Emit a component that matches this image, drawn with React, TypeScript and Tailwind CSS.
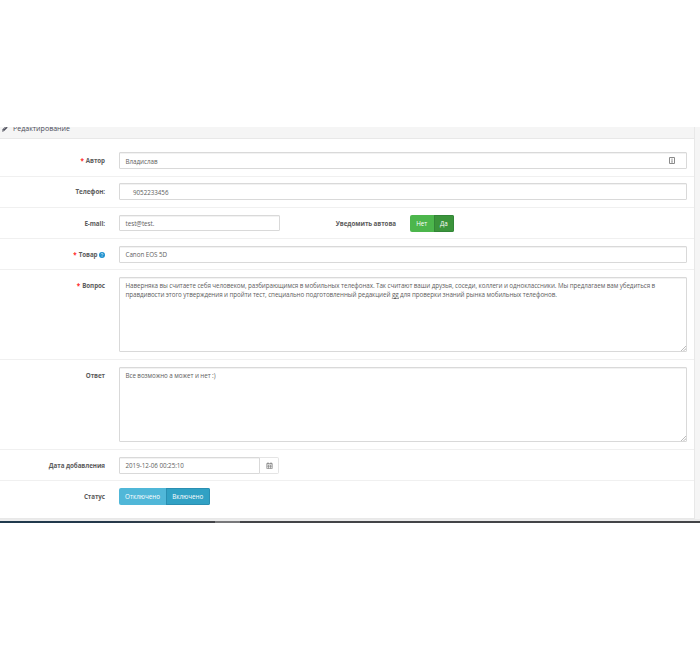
import type { ReactNode } from 'react';
import clsx from 'clsx';
import { FaPencilAlt } from 'react-icons/fa';

const FIELD =
  'block border border-[#d9d9d9] bg-white px-[5.5px] text-[6.25px] tracking-[-0.03px] text-[#606060] shadow-[inset_0_1px_0_#f2f2f2] outline-none';

function Row({
  label,
  required,
  help,
  className,
  children,
}: {
  label: string;
  required?: boolean;
  help?: boolean;
  className: string;
  children: ReactNode;
}) {
  return (
    <div className={clsx('flex items-start', className)}>
      <div className="flex w-[105px] shrink-0 items-center justify-end pt-[4px] text-[6.25px] leading-[9px] font-bold tracking-[-0.06px] whitespace-nowrap text-[#5c5c5c]">
        {required ? <span className="mr-[2px] text-[#f22]">*</span> : null}
        {label}
        {help ? <HelpIcon /> : null}
      </div>
      <div className="ml-[14px] flex min-w-0 flex-1 items-start">{children}</div>
    </div>
  );
}

function HelpIcon() {
  return (
    <svg viewBox="0 0 12 12" className="ml-[1.5px] h-[6px] w-[6px] shrink-0">
      <circle cx="6" cy="6" r="6" fill="#1e91cf" />
      <path
        d="M4.200 4.600c0-2.400 3.800-2.300 3.800 0C8 5.900 6.100 5.900 6.100 7.200M6.100 8.300v1.400"
        fill="none"
        stroke="#fff"
        strokeWidth="1.200"
      />
    </svg>
  );
}

function CalendarIcon() {
  return (
    <svg viewBox="0 0 14 14" className="h-[7px] w-[7px]" fill="none" stroke="#777" strokeWidth="1.200">
      <path d="M1.500 3h11v10h-11zM1.500 6h11M1.500 9.500h11M5 6v7M9 6v7" />
      <path d="M4 1v3M10 1v3" strokeWidth="2" />
    </svg>
  );
}

function AutofillIcon() {
  return (
    <svg viewBox="0 0 6 7" className="h-[7px] w-[6px]" fill="none" stroke="#8a8a8a">
      <path d="M.5.5h5v6h-5z" />
      <path d="M3 1.500v3M2 5h2" strokeWidth=".9" />
    </svg>
  );
}

function TextArea({ children }: { children: ReactNode }) {
  return (
    <div className={clsx(FIELD, 'relative h-[75px] w-[568px] rounded-[1px] pt-[3px]')}>
      <div className="leading-[9px] tracking-[-0.073px]">{children}</div>
      <svg
        viewBox="0 0 5 5"
        className="absolute right-0 bottom-0 h-[5px] w-[5px]"
        stroke="#888"
        strokeWidth=".8"
        strokeDasharray="1 .4"
      >
        <path d="M0 5 5 0M2.500 5 5 2.500" />
      </svg>
    </div>
  );
}

export default function App() {
  return (
    <div className="h-[650px] w-[700px] overflow-hidden bg-white pt-[127px] font-['Open_Sans',sans-serif]">
      <div className="flex h-[394px] border-b-2 border-[#ebebeb] bg-[#f5f5f5]">
        <div className="flex h-[392px] w-[695px] flex-col border-r border-b border-[#e8e8e8] bg-white">
          <div className="flex h-[12px] items-start overflow-hidden border-b border-[#e8e8e8] bg-[#f5f5f5] pl-[2px] text-[7.05px] leading-[10px] text-[#4c4d5a]">
            <FaPencilAlt className="mt-[-2px] mr-[4.5px] h-[6.5px] w-[6.5px] shrink-0" />
            <span className="-mt-[4px]">Редактирование</span>
          </div>

          <Row label="Автор" required className="h-[37px] pt-[13px]">
            <div
              className={clsx(FIELD, 'flex h-[17px] w-[568px] items-center justify-between rounded-[1px] pt-[2px]')}
            >
              Владислав
              <span className="mr-[6px] -mt-[2px]">
                <AutofillIcon />
              </span>
            </div>
          </Row>

          <Row label="Телефон:" className="h-[31px] border-t border-[#f0f0f0] pt-[6px]">
            <div className={clsx(FIELD, 'flex h-[17px] w-[568px] items-center rounded-[1px] pt-[2px]')}>
              <span className="pl-[7.5px]">9052233456</span>
            </div>
          </Row>

          <Row label="E-mail:" className="h-[31px] border-t border-[#f0f0f0] pt-[7px]">
            <div className={clsx(FIELD, 'flex h-[16px] w-[161px] items-center rounded-[1px] pt-px')}>test@test.</div>
            <div className="w-[116px] pt-[4px] text-right text-[6.25px] leading-[9px] font-bold tracking-[-0.06px] text-[#5c5c5c]">
              Уведомить автова
            </div>
            <div className="ml-[14px] flex h-[17px] w-[44px] overflow-hidden rounded-[2px] text-[6.25px] text-white">
              <button className="w-[23.5px] bg-[#4cb64c]">Нет</button>
              <button className="flex-1 border border-[#328637] bg-[#3b943b]">Да</button>
            </div>
          </Row>

          <Row label="Товар" required help className="h-[31px] border-t border-[#f0f0f0] pt-[7px]">
            <div className={clsx(FIELD, 'flex h-[17px] w-[568px] items-center rounded-[1px]')}>Canon EOS 5D</div>
          </Row>

          <Row label="Вопрос" required className="h-[90px] border-t border-[#f0f0f0] pt-[7px]">
            <TextArea>
              <p className="whitespace-nowrap">
                Наверняка вы считаете себя человеком, разбирающимся в мобильных телефонах. Так считают ваши друзья,
                соседи, коллеги и одноклассники. Мы предлагаем вам убедиться в
              </p>
              <p className="whitespace-nowrap">
                правдивости этого утверждения и пройти тест, специально подготовленный редакцией <u>gg</u> для проверки
                знаний рынка мобильных телефонов.
              </p>
            </TextArea>
          </Row>

          <Row label="Ответ" className="h-[90px] border-t border-[#f0f0f0] pt-[7px]">
            <TextArea>Все возможно а может и нет :)</TextArea>
          </Row>

          <Row label="Дата добавления" className="h-[31px] border-t border-[#f0f0f0] pt-[7px]">
            <div className={clsx(FIELD, 'flex h-[17px] w-[141px] items-center rounded-l-[1px]')}>
              2019-12-06 00:25:10
            </div>
            <button className="flex h-[17px] w-[19px] items-center justify-center rounded-r-[2px] border border-l-0 border-[#e4e4e4]">
              <CalendarIcon />
            </button>
          </Row>

          <Row label="Статус" className="h-[38px] border-t border-[#f0f0f0] pt-[7px]">
            <div className="flex h-[17px] w-[90.5px] overflow-hidden rounded-[2px] text-[6.25px] text-white">
              <button className="w-[47px] bg-[#50b7d8]">Отключено</button>
              <button className="flex-1 border border-[#2a8fb2] bg-[#31a1c4]">Включено</button>
            </div>
          </Row>
        </div>
      </div>

      <div className="flex h-[2px] bg-[#434447]">
        <div className="w-[215px] bg-linear-to-r from-[#1f3a4d] via-[#24384a] to-[#434447]" />
        <div className="w-[25px] bg-[#77787a]" />
      </div>
    </div>
  );
}
